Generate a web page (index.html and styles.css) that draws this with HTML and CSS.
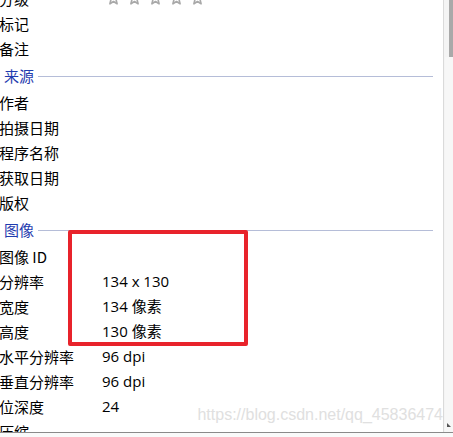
FILE: index.html
```html
<!DOCTYPE html>
<html lang="zh">
<head>
<meta charset="utf-8">
<link rel="stylesheet" href="styles.css">
</head>
<body>
<div class="window">
  <div class="content">
    <div class="props">
      <div class="row"><span class="label">分级</span><span class="value stars">
        <svg class="star" viewBox="0 0 12 12"><path d="M6 0.8 L7.5 4.4 L11.3 4.6 L8.4 7.1 L9.3 10.9 L6 8.8 L2.7 10.9 L3.6 7.1 L0.7 4.6 L4.5 4.4 Z"/></svg>
        <svg class="star" viewBox="0 0 12 12"><path d="M6 0.8 L7.5 4.4 L11.3 4.6 L8.4 7.1 L9.3 10.9 L6 8.8 L2.7 10.9 L3.6 7.1 L0.7 4.6 L4.5 4.4 Z"/></svg>
        <svg class="star" viewBox="0 0 12 12"><path d="M6 0.8 L7.5 4.4 L11.3 4.6 L8.4 7.1 L9.3 10.9 L6 8.8 L2.7 10.9 L3.6 7.1 L0.7 4.6 L4.5 4.4 Z"/></svg>
        <svg class="star" viewBox="0 0 12 12"><path d="M6 0.8 L7.5 4.4 L11.3 4.6 L8.4 7.1 L9.3 10.9 L6 8.8 L2.7 10.9 L3.6 7.1 L0.7 4.6 L4.5 4.4 Z"/></svg>
        <svg class="star" viewBox="0 0 12 12"><path d="M6 0.8 L7.5 4.4 L11.3 4.6 L8.4 7.1 L9.3 10.9 L6 8.8 L2.7 10.9 L3.6 7.1 L0.7 4.6 L4.5 4.4 Z"/></svg>
      </span></div>
      <div class="row"><span class="label">标记</span><span class="value"></span></div>
      <div class="row"><span class="label">备注</span><span class="value"></span></div>
      <div class="group"><span class="group-title">来源</span><span class="group-line"></span></div>
      <div class="row"><span class="label">作者</span><span class="value"></span></div>
      <div class="row"><span class="label">拍摄日期</span><span class="value"></span></div>
      <div class="row"><span class="label">程序名称</span><span class="value"></span></div>
      <div class="row"><span class="label">获取日期</span><span class="value"></span></div>
      <div class="row"><span class="label">版权</span><span class="value"></span></div>
      <div class="group"><span class="group-title">图像</span><span class="group-line"></span></div>
      <div class="row"><span class="label">图像 ID</span><span class="value"></span></div>
      <div class="row"><span class="label">分辨率</span><span class="value">134 x 130</span></div>
      <div class="row"><span class="label">宽度</span><span class="value">134 像素</span></div>
      <div class="row"><span class="label">高度</span><span class="value">130 像素</span></div>
      <div class="row"><span class="label">水平分辨率</span><span class="value">96 dpi</span></div>
      <div class="row"><span class="label">垂直分辨率</span><span class="value">96 dpi</span></div>
      <div class="row"><span class="label">位深度</span><span class="value">24</span></div>
      <div class="row"><span class="label">压缩</span><span class="value"></span></div>
    </div>
    <div class="scrollbar">
      <div class="thumb"></div>
      <div class="track"></div>
      <div class="grip"></div>
    </div>
  </div>
  <div class="bottom"></div>
  <div class="highlight"></div>
  <div class="watermark">https://blog.csdn.net/qq_45836474</div>
</div>
</body>
</html>
```

FILE: styles.css
```css
html, body {
  margin: 0;
  padding: 0;
  background: #ffffff;
}

.window {
  position: relative;
  width: 453px;
  height: 437px;
  overflow: hidden;
  display: flex;
  flex-direction: column;
  font-family: "Noto Sans CJK SC", "Noto Sans", sans-serif;
  font-size: 15px;
  color: #000000;
}

.content {
  height: 432px;
  display: flex;
  border-bottom: 1px solid #8a8a8a;
}

.props {
  flex: 1;
  overflow: hidden;
  margin-left: -1px;
}

.props > :first-child {
  margin-top: -14px;
}

.row {
  display: grid;
  grid-template-columns: 103px 1fr;
  height: 25px;
  line-height: 25px;
  white-space: nowrap;
}

.value {
  font-family: "Open Sans", "Noto Sans CJK SC", sans-serif;
}

.stars {
  display: flex;
  align-items: flex-start;
  gap: 8px;
  padding-left: 5px;
  padding-top: 6px;
}

.star {
  width: 13px;
  height: 13px;
  fill: none;
  stroke: #a9a9a9;
  stroke-width: 1.5;
  stroke-linejoin: round;
}

.group {
  display: flex;
  align-items: center;
  height: 29px;
  padding-left: 5px;
  gap: 4px;
}

.group-title {
  color: #1f3caf;
  line-height: 29px;
}

.group-line {
  flex: 1;
  height: 1px;
  background: #b5bdd8;
  margin-right: 10px;
  margin-top: 2px;
}

.scrollbar {
  width: 9px;
  border-left: 1px solid #dadada;
  background: #f4f4f4;
  display: flex;
  flex-direction: column;
  position: relative;
}

.thumb {
  height: 57px;
  margin-left: 5px;
  background: #a9a9a9;
}

.track {
  flex: 1;
  background: #f7f7f7;
  margin-left: 1px;
}

.grip {
  position: absolute;
  left: 3px;
  bottom: 5px;
  width: 0;
  height: 0;
  border-left: 4px solid transparent;
  border-top: 4px solid #555555;
  transform: rotate(180deg);
}

.bottom {
  flex: 1;
  background: #fafafa;
}

.highlight {
  position: absolute;
  left: 68px;
  top: 230px;
  width: 172px;
  height: 108px;
  border: 4px solid #e8232b;
  border-radius: 2px;
}

.watermark {
  position: absolute;
  right: 10px;
  top: 403px;
  font-family: "Liberation Sans", Arial, sans-serif;
  font-size: 16px;
  line-height: 24px;
  color: #e0e0e0;
  white-space: nowrap;
}
```
